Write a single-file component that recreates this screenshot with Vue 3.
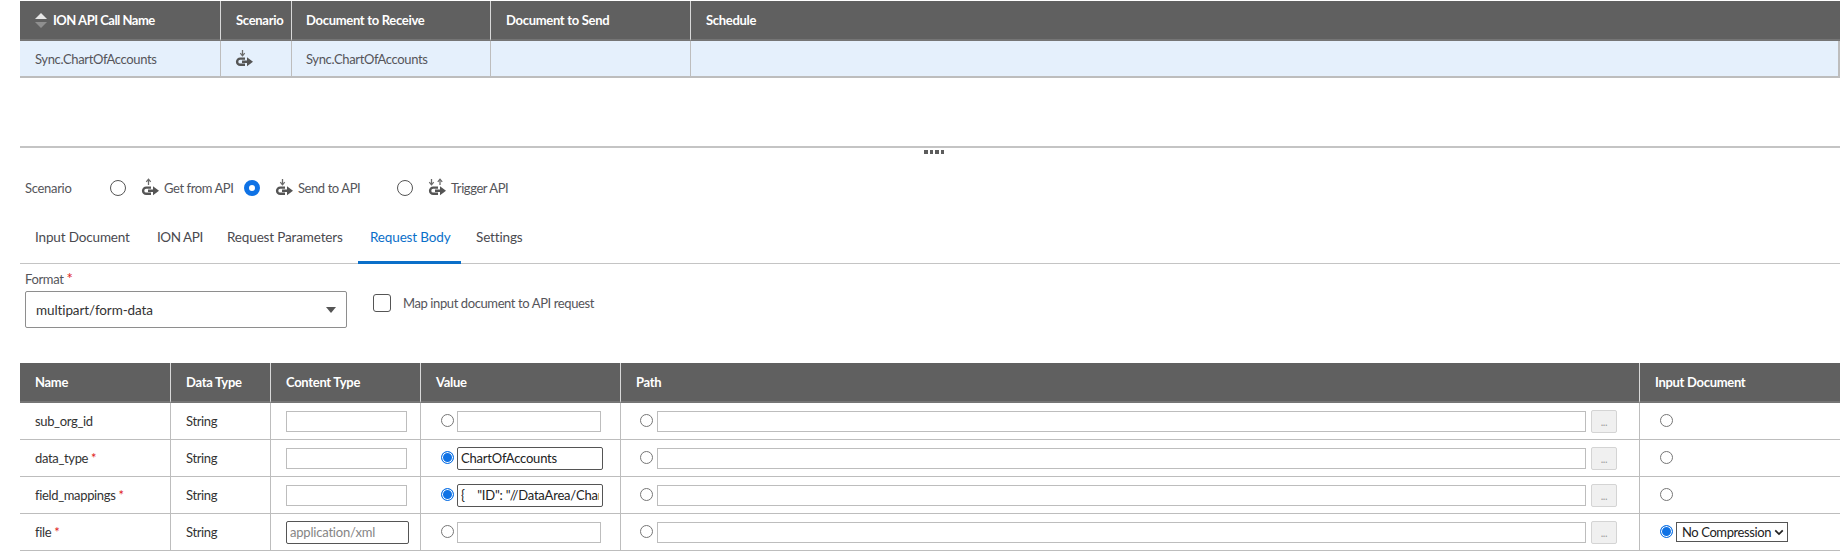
<script setup>
const topCols = [
  { label: 'ION API Call Name', w: 201 },
  { label: 'Scenario', w: 71 },
  { label: 'Document to Receive', w: 199 },
  { label: 'Document to Send', w: 200 },
  { label: 'Schedule', w: 1149 }
]
const bodyCols = [
  { label: 'Name', w: 151 },
  { label: 'Data Type', w: 100 },
  { label: 'Content Type', w: 150 },
  { label: 'Value', w: 200 },
  { label: 'Path', w: 1019 },
  { label: 'Input Document', w: 200 }
]
const rows = [
  { name: 'sub_org_id', req: false, content: '', focusContent: false, valueOn: false, value: '', inputOn: false },
  { name: 'data_type', req: true, content: '', focusContent: false, valueOn: true, value: 'ChartOfAccounts', inputOn: false },
  { name: 'field_mappings', req: true, content: '', focusContent: false, valueOn: true, value: '{    "ID": "//DataArea/ChartOfAccounts/ID"', inputOn: false },
  { name: 'file', req: true, content: 'application/xml', focusContent: true, valueOn: false, value: '', inputOn: true }
]
const tabs = ['Input Document', 'ION API', 'Request Parameters', 'Request Body', 'Settings']
</script>

<template>
  <div class="page">
    <table class="grid top-grid">
      <colgroup><col v-for="c in topCols" :key="c.label" :style="{ width: c.w + 'px' }"></colgroup>
      <thead>
        <tr>
          <th v-for="(c, i) in topCols" :key="c.label">
            <span v-if="i === 0" class="sort-head">
              <span class="sort"><i class="up"></i><i class="down"></i></span>{{ c.label }}
            </span>
            <template v-else>{{ c.label }}</template>
          </th>
        </tr>
      </thead>
      <tbody>
        <tr class="selected">
          <td>Sync.ChartOfAccounts</td>
          <td class="icon-cell">
            <svg class="api-icon" width="20" height="20" viewBox="0 0 20 20"><path d="M8.5 1v5.5" class="thin"/><path d="M6.3 4.2 8.5 6.8 10.7 4.2" class="thin"/><path d="M11 9.6H6.2a3.1 3.1 0 0 0 0 6.2H11" class="hook"/><path d="M8 11.4h5V8.2l6 4.5-6 4.5V14H8z" class="solid"/></svg>
          </td>
          <td>Sync.ChartOfAccounts</td>
          <td></td>
          <td></td>
        </tr>
      </tbody>
    </table>

    <div class="divider"><span class="grip"><i></i><i></i><i></i><i></i></span></div>

    <div class="scenario">
      <span class="scenario-label">Scenario</span>
      <label class="scenario-opt get">
        <span class="radio"></span>
        <svg class="api-icon" width="20" height="20" viewBox="0 0 20 20"><path d="M8.5 7V1.5" class="thin"/><path d="M6.3 3.8 8.5 1.2 10.7 3.8" class="thin"/><path d="M11 9.6H6.2a3.1 3.1 0 0 0 0 6.2H11" class="hook"/><path d="M8 11.4h5V8.2l6 4.5-6 4.5V14H8z" class="solid"/></svg>
        <span>Get from API</span>
      </label>
      <label class="scenario-opt send">
        <span class="radio on"></span>
        <svg class="api-icon" width="20" height="20" viewBox="0 0 20 20"><path d="M8.5 1v5.5" class="thin"/><path d="M6.3 4.2 8.5 6.8 10.7 4.2" class="thin"/><path d="M11 9.6H6.2a3.1 3.1 0 0 0 0 6.2H11" class="hook"/><path d="M8 11.4h5V8.2l6 4.5-6 4.5V14H8z" class="solid"/></svg>
        <span>Send to API</span>
      </label>
      <label class="scenario-opt trigger">
        <span class="radio"></span>
        <svg class="api-icon" width="20" height="20" viewBox="0 0 20 20"><path d="M4.5 1v5.5" class="thin"/><path d="M2.3 4.2 4.5 6.8 6.7 4.2" class="thin"/><path d="M13 7V1.5" class="thin"/><path d="M10.8 3.8 13 1.2 15.2 3.8" class="thin"/><path d="M11 9.6H6.2a3.1 3.1 0 0 0 0 6.2H11" class="hook"/><path d="M8 11.4h5V8.2l6 4.5-6 4.5V14H8z" class="solid"/></svg>
        <span>Trigger API</span>
      </label>
    </div>

    <div class="tabs">
      <span v-for="t in tabs" :key="t" class="tab" :class="{ active: t === 'Request Body' }">{{ t }}</span>
    </div>

    <div class="format-row">
      <div class="format">
        <div class="format-label">Format <b>*</b></div>
        <div class="fake-select">multipart/form-data<i class="caret"></i></div>
      </div>
      <label class="map">
        <span class="box"></span>
        <span>Map input document to API request</span>
      </label>
    </div>

    <table class="grid body-grid">
      <colgroup><col v-for="c in bodyCols" :key="c.label" :style="{ width: c.w + 'px' }"></colgroup>
      <thead>
        <tr><th v-for="c in bodyCols" :key="c.label">{{ c.label }}</th></tr>
      </thead>
      <tbody>
        <tr v-for="r in rows" :key="r.name">
          <td class="name">{{ r.name }}<b v-if="r.req"> *</b></td>
          <td class="dark">String</td>
          <td class="form">
            <input class="field ct" :class="{ focus: r.focusContent }" :placeholder="r.content" readonly>
          </td>
          <td class="form value-cell">
            <div class="inline">
              <span class="mini-radio" :class="{ on: r.valueOn }"></span>
              <input class="field val" :class="{ focus: r.valueOn }" :value="r.value" readonly>
            </div>
          </td>
          <td class="form radio-cell">
            <div class="inline">
              <span class="mini-radio"></span>
              <input class="field path" readonly>
              <span class="browse">...</span>
            </div>
          </td>
          <td class="form">
            <div class="inline input-doc">
              <span class="mini-radio" :class="{ on: r.inputOn }"></span>
              <span v-if="r.inputOn" class="compress">No Compression
                <svg width="10" height="7" viewBox="0 0 11 8"><path d="M1.2 1.5 5.5 5.8 9.8 1.5" /></svg>
              </span>
            </div>
          </td>
        </tr>
      </tbody>
    </table>
  </div>
</template>

<style scoped>
.page {
  width: 1840px;
  height: 551px;
  box-sizing: border-box;
  padding: 1px 0 0 20px;
  overflow: hidden;
  background: #fff;
  font-family: "Lato", "Noto Sans", sans-serif;
  font-size: 13px;
  letter-spacing: -0.35px;
  color: #55555a;
}
.grid {
  table-layout: fixed;
  border-collapse: separate;
  border-spacing: 0;
  width: 1820px;
}
.grid th {
  background: #606060;
  color: #fff;
  font-weight: 700;
  font-size: 13px;
  letter-spacing: -0.3px;
  text-align: left;
  padding: 0 0 0 15px;
  height: 38px;
  border-right: 1px solid #d8d8d8;
  border-bottom: 2px solid #757575;
  white-space: nowrap;
  overflow: hidden;
}
.grid th:last-child { border-right: 0; }
.top-grid th:nth-child(3), .top-grid td:nth-child(3) { padding-left: 14px; }
.grid td {
  height: 36px;
  padding: 0 0 0 15px;
  border-right: 1px solid #bdbdbd;
  border-bottom: 1px solid #bdbdbd;
  font-size: 13px;
  white-space: nowrap;
  overflow: hidden;
  box-sizing: content-box;
}
.grid td:last-child { border-right: 0; }
.selected td { background: #e5f0fc; border-bottom-width: 2px; height: 35px; }
.selected td:last-child { border-right: 2px solid #bdbdbd; }
.selected td.icon-cell { padding-left: 13px; }
.sort-head { display: flex; align-items: center; letter-spacing: -0.5px; }
.sort {
  display: flex;
  flex-direction: column;
  gap: 3px;
  margin-right: 6px;
}
.sort i { display: block; width: 0; height: 0; border-left: 6px solid transparent; border-right: 6px solid transparent; }
.sort .up { border-bottom: 6px solid #e6e6e6; }
.sort .down { border-top: 6px solid #8f8f8f; }
.api-icon { display: block; flex: none; }
.api-icon .thin { fill: none; stroke: #6a6a6a; stroke-width: 1.3; }
.api-icon .hook { fill: none; stroke: #555; stroke-width: 2.4; }
.api-icon .solid { fill: #555; }

.divider {
  margin-top: 68px;
  height: 2px;
  background: #c4c4c4;
  position: relative;
}
.grip {
  position: absolute;
  top: 4px;
  left: 904px;
  display: flex;
  gap: 2px;
}
.grip i { width: 3.5px; height: 3.5px; background: #5c5c5c; }

.scenario {
  display: flex;
  align-items: center;
  height: 24px;
  margin-top: 28px;
  padding-left: 5px;
  font-size: 13px;
  letter-spacing: -0.42px;
}
.scenario-label { width: 85px; letter-spacing: -0.3px; }
.scenario-opt { display: flex; align-items: center; }
.scenario-opt.get { width: 134px; }
.scenario-opt.send { width: 153px; }
.scenario-opt .api-icon { margin: 0 4px 0 14px; }
.radio {
  flex: none;
  box-sizing: border-box;
  width: 16px;
  height: 16px;
  border: 1.5px solid #555;
  border-radius: 50%;
  background: #fff;
}
.radio.on { border: 5px solid #0f72e5; }

.tabs {
  display: flex;
  gap: 3px;
  margin-top: 25px;
  height: 38px;
  padding-left: 3px;
  border-bottom: 1px solid #c4c4c4;
  align-items: stretch;
}
.tab {
  padding: 0 0 13px 12px;
  display: flex;
  align-items: center;
  font-size: 13.5px;
  letter-spacing: -0.15px;
  color: #4a4a4f;
  margin-bottom: -1px;
  border-bottom: 3px solid transparent;
  box-sizing: border-box;
}
.tab:nth-child(1) { width: 119px; }
.tab:nth-child(2) { width: 67px; letter-spacing: -0.45px; }
.tab:nth-child(3) { width: 140px; }
.tab:nth-child(4) { width: 103px; }
.tab:nth-child(5) { width: 71px; }
.tab.active { color: #0a6fc9; border-bottom-color: #0a6fc9; }

.format-row {
  display: flex;
  padding-left: 5px;
  margin-top: 6px;
  height: 93px;
}
.format { width: 322px; }
.format-label { font-size: 13px; line-height: 16px; height: 21px; }
.format-label b { color: #e02020; font-weight: 400; font-size: 15px; }
.fake-select {
  box-sizing: border-box;
  height: 37px;
  border: 1px solid #8e8e8e;
  border-radius: 2px;
  padding-left: 10px;
  display: flex;
  align-items: center;
  justify-content: space-between;
  color: #333;
  font-size: 13.5px;
  letter-spacing: -0.1px;
}
.caret {
  width: 0;
  height: 0;
  margin-right: 10px;
  border-left: 5px solid transparent;
  border-right: 5px solid transparent;
  border-top: 6px solid #555;
}
.map {
  display: flex;
  align-items: center;
  gap: 12px;
  margin-left: 26px;
  height: 18px;
  margin-top: 24px;
  font-size: 13px;
  letter-spacing: -0.4px;
}
.box {
  box-sizing: border-box;
  width: 18px;
  height: 18px;
  border: 1.5px solid #555;
  border-radius: 3px;
  background: #fff;
}

.body-grid td { color: #333; }
.body-grid td b { color: #e02020; font-weight: 400; font-size: 13px; }
.body-grid td.radio-cell { padding-left: 19px; }
.body-grid td.value-cell { padding-left: 20px; }
.inline { display: flex; align-items: center; }
.field {
  box-sizing: border-box;
  height: 21px;
  border: 1px solid #bdbdbd;
  background: #fff;
  padding: 0 3px;
  font: 13px "Lato", "Noto Sans", sans-serif;
  letter-spacing: -0.2px;
  color: #222;
  outline: none;
  display: block;
}
.field.ct { width: 121px; }
.field.ct.focus { width: 123px; height: 23px; border: 1px solid #555; border-radius: 2px; }
.field.ct::placeholder { color: #858585; opacity: 1; }
.field.val { width: 144px; margin-left: 3px; }
.field.val.focus { width: 146px; height: 23px; border: 1px solid #555; border-radius: 2px; }
.field.path { width: 929px; margin-left: 4px; }
.mini-radio {
  flex: none;
  box-sizing: border-box;
  width: 13px;
  height: 13px;
  margin-top: -1px;
  border: 1px solid #767676;
  border-radius: 50%;
  background: #fff;
}
.mini-radio.on {
  background: #0f72e5;
  border: 1.5px solid #0f72e5;
  box-shadow: inset 0 0 0 1px #fff;
}
.browse {
  box-sizing: border-box;
  width: 26px;
  height: 23px;
  margin-left: 5px;
  background: #f0f0f0;
  border: 1px solid #d4d4d4;
  border-radius: 2px;
  font-size: 11px;
  color: #a0a0a0;
  text-align: center;
  line-height: 22px;
}
.input-doc { padding-left: 5px; }
.compress {
  box-sizing: border-box;
  display: flex;
  align-items: center;
  justify-content: space-between;
  width: 112px;
  height: 20px;
  margin-left: 3px;
  padding: 0 3px 0 5px;
  border: 1px solid #555;
  color: #222;
  font-size: 13px;
  letter-spacing: -0.4px;
}
.compress svg { fill: none; stroke: #222; stroke-width: 2; }
</style>
